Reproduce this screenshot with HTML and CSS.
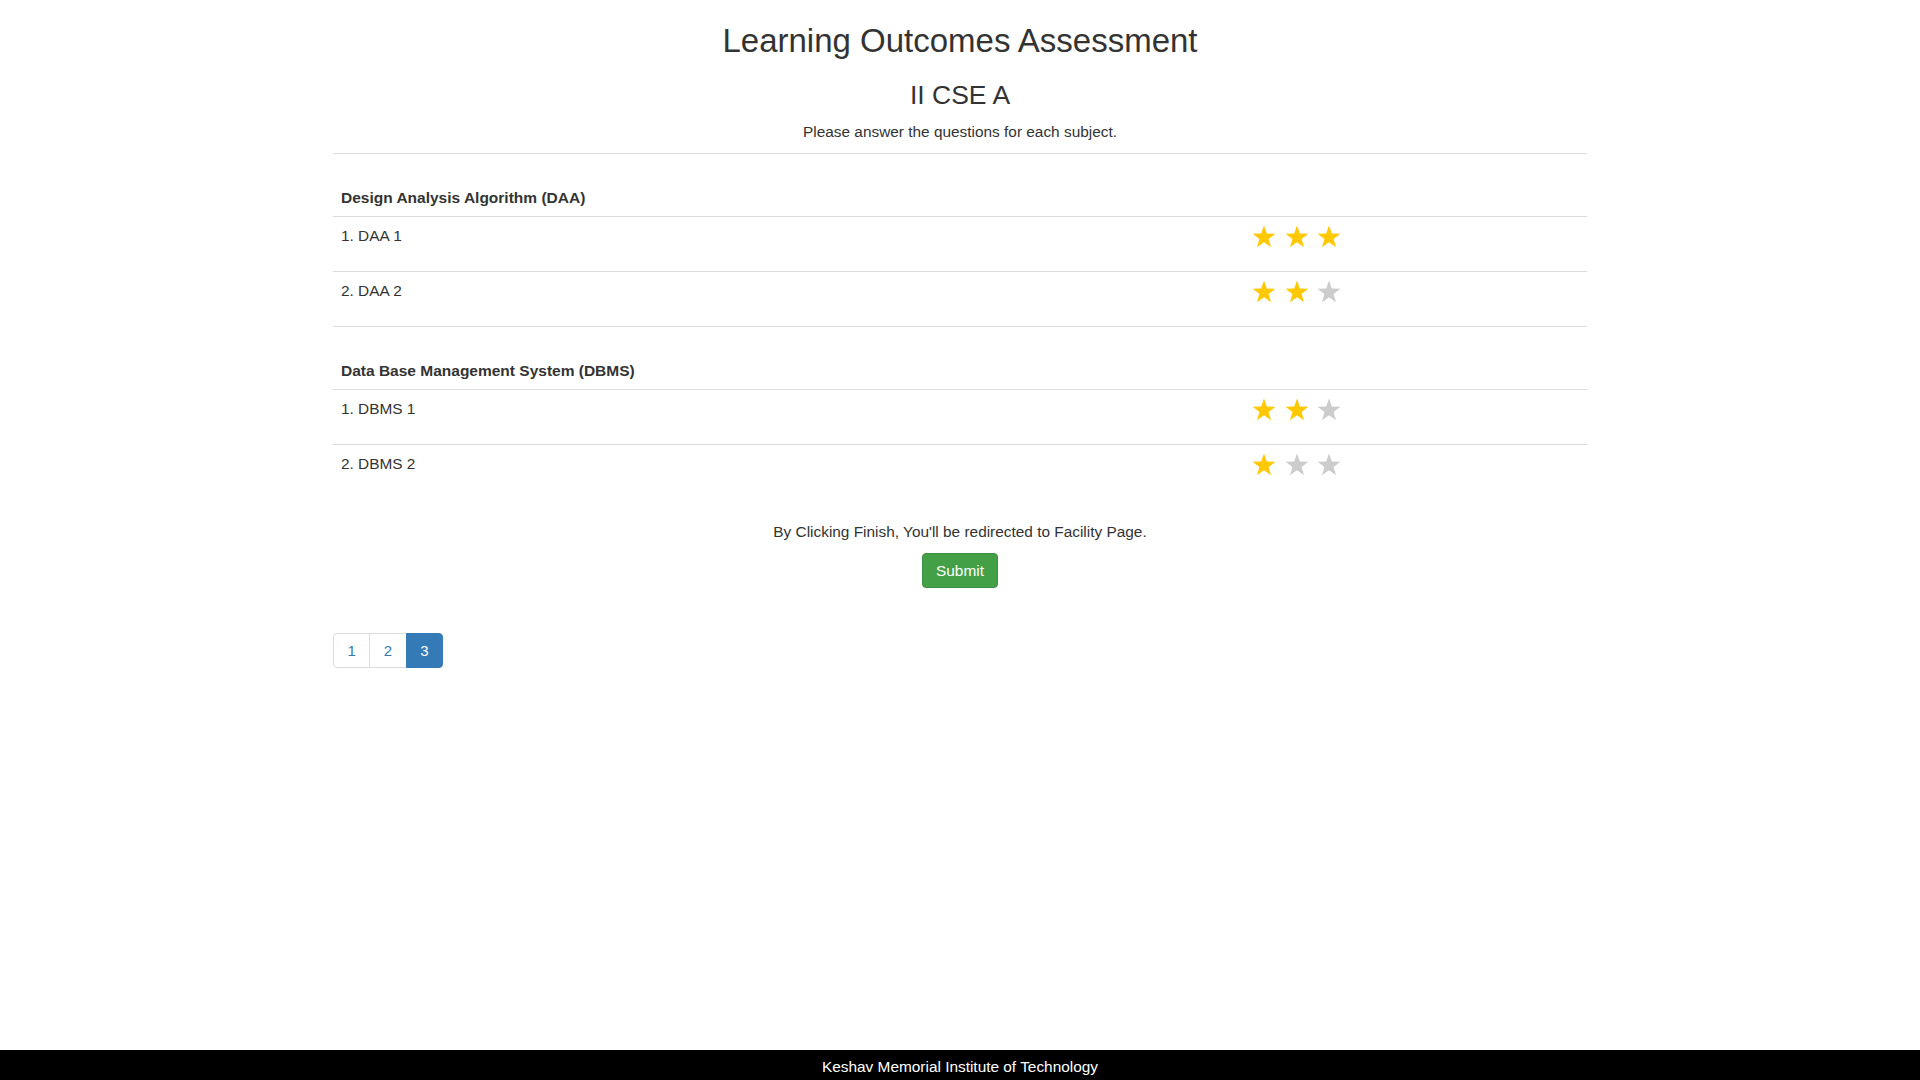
FILE: index.html
```html
<!DOCTYPE html>
<html lang="en">
<head>
<meta charset="utf-8">
<title>Learning Outcomes Assessment</title>
<link rel="stylesheet" href="styles.css">
</head>
<body>
<main class="container">
  <h1 class="title">Learning Outcomes Assessment</h1>
  <h3 class="subtitle">II CSE A</h3>
  <p class="intro">Please answer the questions for each subject.</p>

  <section class="subject">
    <div class="subject-head">Design Analysis Algorithm (DAA)</div>
    <div class="q-row">
      <div class="q-text">1. DAA 1</div>
      <div class="rating">
        <svg class="star on" viewBox="0 0 24 24"><polygon points="12,0.5 14.82,8.62 23.41,8.79 16.57,13.98 19.05,22.21 12,17.3 4.95,22.21 7.43,13.98 0.59,8.79 9.18,8.62"/></svg>
        <svg class="star on" viewBox="0 0 24 24"><polygon points="12,0.5 14.82,8.62 23.41,8.79 16.57,13.98 19.05,22.21 12,17.3 4.95,22.21 7.43,13.98 0.59,8.79 9.18,8.62"/></svg>
        <svg class="star on" viewBox="0 0 24 24"><polygon points="12,0.5 14.82,8.62 23.41,8.79 16.57,13.98 19.05,22.21 12,17.3 4.95,22.21 7.43,13.98 0.59,8.79 9.18,8.62"/></svg>
      </div>
    </div>
    <div class="q-row">
      <div class="q-text">2. DAA 2</div>
      <div class="rating">
        <svg class="star on" viewBox="0 0 24 24"><polygon points="12,0.5 14.82,8.62 23.41,8.79 16.57,13.98 19.05,22.21 12,17.3 4.95,22.21 7.43,13.98 0.59,8.79 9.18,8.62"/></svg>
        <svg class="star on" viewBox="0 0 24 24"><polygon points="12,0.5 14.82,8.62 23.41,8.79 16.57,13.98 19.05,22.21 12,17.3 4.95,22.21 7.43,13.98 0.59,8.79 9.18,8.62"/></svg>
        <svg class="star" viewBox="0 0 24 24"><polygon points="12,0.5 14.82,8.62 23.41,8.79 16.57,13.98 19.05,22.21 12,17.3 4.95,22.21 7.43,13.98 0.59,8.79 9.18,8.62"/></svg>
      </div>
    </div>
  </section>

  <section class="subject">
    <div class="subject-head">Data Base Management System (DBMS)</div>
    <div class="q-row">
      <div class="q-text">1. DBMS 1</div>
      <div class="rating">
        <svg class="star on" viewBox="0 0 24 24"><polygon points="12,0.5 14.82,8.62 23.41,8.79 16.57,13.98 19.05,22.21 12,17.3 4.95,22.21 7.43,13.98 0.59,8.79 9.18,8.62"/></svg>
        <svg class="star on" viewBox="0 0 24 24"><polygon points="12,0.5 14.82,8.62 23.41,8.79 16.57,13.98 19.05,22.21 12,17.3 4.95,22.21 7.43,13.98 0.59,8.79 9.18,8.62"/></svg>
        <svg class="star" viewBox="0 0 24 24"><polygon points="12,0.5 14.82,8.62 23.41,8.79 16.57,13.98 19.05,22.21 12,17.3 4.95,22.21 7.43,13.98 0.59,8.79 9.18,8.62"/></svg>
      </div>
    </div>
    <div class="q-row">
      <div class="q-text">2. DBMS 2</div>
      <div class="rating">
        <svg class="star on" viewBox="0 0 24 24"><polygon points="12,0.5 14.82,8.62 23.41,8.79 16.57,13.98 19.05,22.21 12,17.3 4.95,22.21 7.43,13.98 0.59,8.79 9.18,8.62"/></svg>
        <svg class="star" viewBox="0 0 24 24"><polygon points="12,0.5 14.82,8.62 23.41,8.79 16.57,13.98 19.05,22.21 12,17.3 4.95,22.21 7.43,13.98 0.59,8.79 9.18,8.62"/></svg>
        <svg class="star" viewBox="0 0 24 24"><polygon points="12,0.5 14.82,8.62 23.41,8.79 16.57,13.98 19.05,22.21 12,17.3 4.95,22.21 7.43,13.98 0.59,8.79 9.18,8.62"/></svg>
      </div>
    </div>
  </section>

  <div class="finish">
    <p class="finish-note">By Clicking Finish, You'll be redirected to Facility Page.</p>
    <button class="btn-submit" type="button">Submit</button>
  </div>

  <ul class="pagination">
    <li><a href="#" class="page">1</a></li>
    <li><a href="#" class="page">2</a></li>
    <li><a href="#" class="page active">3</a></li>
  </ul>
</main>
<footer class="footer">Keshav Memorial Institute of Technology</footer>
</body>
</html>
```
FILE: styles.css
```css
* { box-sizing: border-box; }
html, body { margin: 0; padding: 0; }
body {
  font-family: "Liberation Sans", Arial, Helvetica, sans-serif;
  font-size: 15.4px;
  line-height: 20px;
  color: #333;
  background: #fff;
  min-height: 100vh;
  display: flex;
  flex-direction: column;
}
.container {
  width: 1254px;
  margin: 0 auto;
}
.title {
  margin: 23px 0 0;
  font-size: 33px;
  line-height: 36px;
  font-weight: 400;
  text-align: center;
}
.subtitle {
  margin: 22px 0 0;
  font-size: 26.5px;
  line-height: 28px;
  font-weight: 400;
  text-align: center;
}
.intro {
  margin: 13px 0 0;
  text-align: center;
}
.subject {
  border-top: 1px solid #ddd;
  padding-top: 26px;
}
.subject:first-of-type { margin-top: 11px; }
.subject-head {
  padding: 8px;
  font-weight: 700;
  font-size: 15.5px;
  height: 36px;
}
.q-row {
  display: grid;
  grid-template-columns: 1fr 343px;
  height: 55px;
  border-top: 1px solid #ddd;
}
.q-text { padding: 9px 8px 0; }
.rating {
  display: flex;
  align-items: flex-start;
  gap: 8.5px;
  padding: 7.5px 8px 0;
}
.star { width: 24px; height: 24px; display: block; fill: #ccc; }
.star.on { fill: #ffc800; }
.finish {
  margin-top: 23px;
  display: flex;
  flex-direction: column;
  align-items: center;
}
.finish-note { margin: 0; }
.btn-submit {
  margin-top: 11px;
  font-family: inherit;
  font-size: 15.4px;
  line-height: 21px;
  padding: 6px 13.5px;
  color: #fff;
  background: #43a047;
  border: 1px solid #3e9142;
  border-radius: 4px;
}
.pagination {
  list-style: none;
  margin: 45px 0 0;
  padding: 0;
  display: flex;
}
.pagination li + li { margin-left: -1px; }
.page {
  display: block;
  padding: 6px 13.5px;
  line-height: 21px;
  font-size: 15px;
  color: #337ab7;
  text-decoration: none;
  border: 1px solid #ddd;
  background: #fff;
}
.pagination li:first-child .page { border-radius: 4px 0 0 4px; }
.pagination li:last-child .page { border-radius: 0 4px 4px 0; }
.page.active {
  background: #337ab7;
  border-color: #337ab7;
  color: #fff;
}
.footer {
  margin-top: auto;
  height: 30px;
  padding-top: 3px;
  line-height: 28px;
  background: #000;
  color: #fff;
  text-align: center;
  font-size: 15.4px;
}
```
